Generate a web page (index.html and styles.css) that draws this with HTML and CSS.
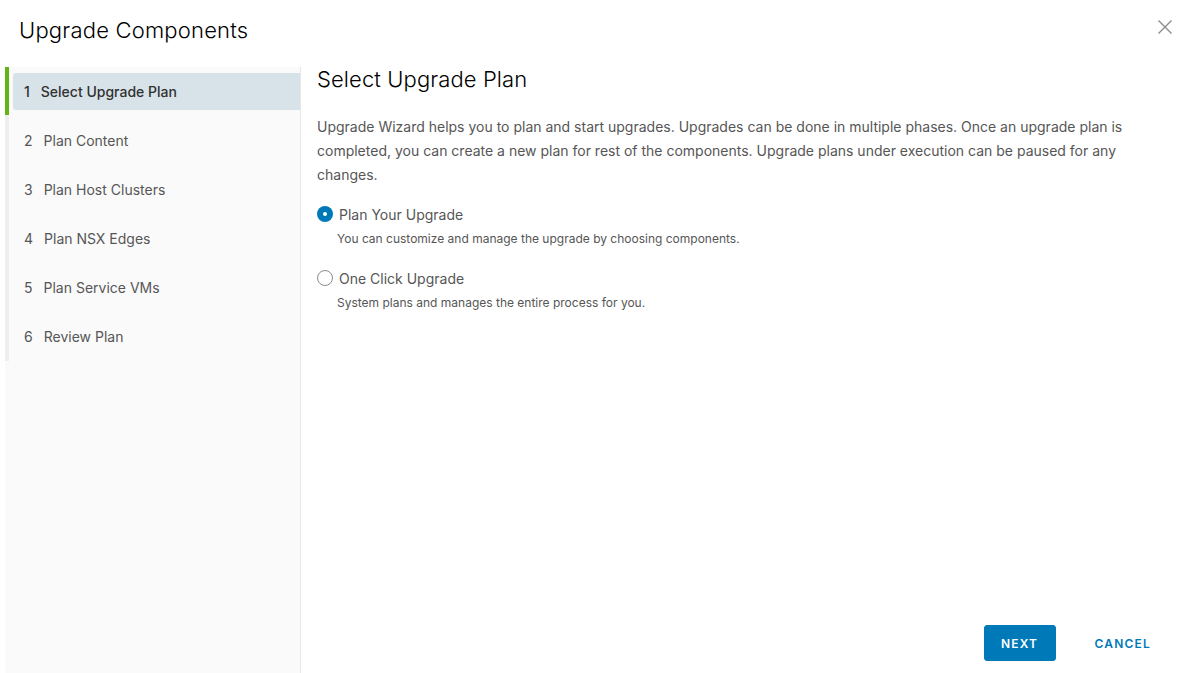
FILE: index.html
```html
<!DOCTYPE html>
<html>
<head>
<meta charset="utf-8">
<link rel="stylesheet" href="styles.css">
</head>
<body>
<div class="modal">
  <header class="modal-header">
    <h1 class="modal-title">Upgrade Components</h1>
    <button class="close" aria-label="Close">
      <svg width="16" height="16" viewBox="0 0 16 16"><path d="M1.5 1.5 L14.5 14.5 M14.5 1.5 L1.5 14.5" stroke="#8c8c8c" stroke-width="1.4" fill="none"/></svg>
    </button>
  </header>
  <div class="modal-body">
    <nav class="stepnav">
      <ul class="steps">
        <li class="step active"><div class="step-inner"><span class="num">1</span><span class="label">Select Upgrade Plan</span></div></li>
        <li class="step"><div class="step-inner"><span class="num">2</span><span class="label">Plan Content</span></div></li>
        <li class="step"><div class="step-inner"><span class="num">3</span><span class="label">Plan Host Clusters</span></div></li>
        <li class="step"><div class="step-inner"><span class="num">4</span><span class="label">Plan NSX Edges</span></div></li>
        <li class="step"><div class="step-inner"><span class="num">5</span><span class="label">Plan Service VMs</span></div></li>
        <li class="step"><div class="step-inner"><span class="num">6</span><span class="label">Review Plan</span></div></li>
      </ul>
    </nav>
    <main class="content">
      <h2 class="page-title">Select Upgrade Plan</h2>
      <p class="intro">Upgrade Wizard helps you to plan and start upgrades. Upgrades can be done in multiple phases. Once an upgrade plan is completed, you can create a new plan for rest of the components. Upgrade plans under execution can be paused for any changes.</p>
      <div class="option first">
        <div class="option-row"><span class="radio checked"></span><span class="option-label">Plan Your Upgrade</span></div>
        <div class="option-help">You can customize and manage the upgrade by choosing components.</div>
      </div>
      <div class="option">
        <div class="option-row"><span class="radio"></span><span class="option-label">One Click Upgrade</span></div>
        <div class="option-help">System plans and manages the entire process for you.</div>
      </div>
      <footer class="footer">
        <button class="btn btn-primary">NEXT</button>
        <button class="btn btn-link">CANCEL</button>
      </footer>
    </main>
  </div>
</div>
</body>
</html>
```
FILE: styles.css
```css
* { box-sizing: border-box; }
html, body { margin: 0; padding: 0; background: #fff; }
body {
  font-family: "Inter", "Liberation Sans", sans-serif;
  color: #565656;
  width: 1185px;
  height: 673px;
  overflow: hidden;
}
.modal {
  display: flex;
  flex-direction: column;
  height: 673px;
}
.modal-header {
  height: 67px;
  display: flex;
  align-items: flex-start;
  justify-content: space-between;
  padding: 0 12px 0 19px;
}
.modal-title {
  margin: 17px 0 0 0;
  font-size: 22px;
  line-height: 26px;
  font-weight: 300;
  color: #000;
  letter-spacing: 0.2px;
}
.close {
  margin-top: 19px;
  background: none;
  border: 0;
  padding: 0;
  width: 16px;
  height: 16px;
  cursor: pointer;
}
.modal-body {
  flex: 1;
  display: flex;
  min-height: 0;
}
.stepnav {
  width: 296px;
  margin-left: 5px;
  background: #fafafa;
  border-right: 1px solid #e8e8e8;
  flex-shrink: 0;
}
.steps {
  list-style: none;
  margin: 0;
  padding: 0;
  border-left: 4px solid #eee;
}
.step {
  height: 49px;
  position: relative;
  padding: 6px 0 0 4px;
}
.step.active::before {
  content: "";
  position: absolute;
  left: -4px;
  top: 0;
  width: 4px;
  height: 48px;
  background: #60b515;
}
.step-inner {
  height: 37px;
  display: flex;
  align-items: center;
  padding-left: 11px;
  font-size: 14px;
  color: #565656;
  border-radius: 3px 0 0 3px;
}
.step.active .step-inner {
  background: #d8e3e9;
  color: #313131;
  font-weight: 500;
}
.num { margin-right: 11px; }
.content {
  flex: 1;
  display: flex;
  flex-direction: column;
  padding: 0 21px 12px 16px;
}
.page-title {
  margin: 0;
  font-size: 22px;
  line-height: 24px;
  font-weight: 300;
  color: #000;
  letter-spacing: 0.1px;
}
.intro {
  margin: 24px 0 0 0;
  font-size: 14px;
  line-height: 24px;
  color: #565656;
}
.option.first { margin-top: 15px; }
.option { margin-top: 18px; }
.option-row {
  display: flex;
  align-items: center;
  height: 24px;
}
.radio {
  width: 16px;
  height: 16px;
  border-radius: 50%;
  border: 1px solid #8c8c8c;
  background: #fff;
  margin-right: 6px;
  position: relative;
  flex-shrink: 0;
}
.radio.checked {
  border: 0;
  background: #0079b8;
}
.radio.checked::after {
  content: "";
  position: absolute;
  left: 6px;
  top: 6px;
  width: 4px;
  height: 4px;
  border-radius: 50%;
  background: #fff;
}
.option-label {
  font-size: 14px;
  color: #565656;
}
.option-help {
  margin-top: 4px;
  padding-left: 20px;
  font-size: 12px;
  line-height: 18px;
  color: #565656;
}
.footer {
  margin-top: auto;
  display: flex;
  justify-content: flex-end;
  align-items: center;
  gap: 26px;
}
.btn {
  height: 36px;
  font-family: inherit;
  font-size: 12px;
  font-weight: 600;
  letter-spacing: 1.2px;
  border-radius: 3px;
  cursor: pointer;
  padding: 0 12px;
}
.btn-primary {
  width: 72px;
  background: #0079b8;
  color: #fff;
  border: 1px solid #0079b8;
}
.btn-link {
  background: none;
  border: 1px solid transparent;
  color: #0079b8;
}
```
